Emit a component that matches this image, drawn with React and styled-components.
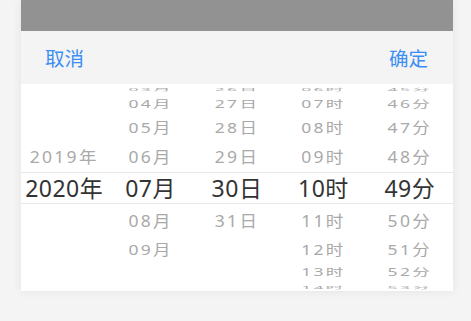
import React from 'react'
import styled, { createGlobalStyle } from 'styled-components'

const Global = createGlobalStyle`
  * {
    margin: 0;
    padding: 0;
    box-sizing: border-box;
  }
  body {
    background: #f4f4f4;
    font-family: "Noto Sans", "Noto Sans CJK SC", sans-serif;
  }
`

const Page = styled.div`
  width: 471px;
  height: 321px;
  padding: 0 18px 0 21px;
`

const Card = styled.div`
  display: flex;
  flex-direction: column;
  background: #fff;
  box-shadow: 0 0 10px rgba(0, 0, 0, 0.07);
`

const Mask = styled.div`
  height: 31px;
  background: #929292;
`

const Header = styled.div`
  height: 53px;
  display: flex;
  align-items: center;
  justify-content: space-between;
  padding: 0 25px 0 24px;
  background: #f4f4f4;
`

const Action = styled.span`
  font-family: "Noto Sans CJK SC", sans-serif;
  font-size: 19.5px;
  color: #3b8ef5;
`

const Body = styled.div`
  position: relative;
  height: 207px;
  display: flex;
  overflow: hidden;
  background: #fff;
`

const Band = styled.div`
  position: absolute;
  left: 0;
  right: 0;
  top: 88px;
  height: 32px;
  border-top: 1px solid #e8e8e8;
  border-bottom: 1px solid #e8e8e8;
  pointer-events: none;
`

const Wheel = styled.div`
  position: relative;
  flex: 1;
`

const Item = styled.div`
  position: absolute;
  left: 0;
  right: 0;
  top: 50%;
  height: 32px;
  margin-top: -16px;
  line-height: 32px;
  text-align: center;
  white-space: nowrap;
  font-family: "Noto Sans", "Noto Sans CJK SC", sans-serif;
  font-size: ${p => (p.$active ? '23px' : '17.5px')};
  letter-spacing: ${p => (p.$active ? '0.5px' : '2.3px')};
  color: ${p => (p.$active ? '#333' : '#a9a9a9')};
`

const OFFSETS = [0, 32, 61, 84, 99]
const SCALES = [1, 0.94, 0.84, 0.6, 0.22]

const pad = n => String(n).padStart(2, '0')

const range = (from, to, fmt) => {
  const out = []
  for (let i = from; i <= to; i++) out.push(fmt(i))
  return out
}

const columns = [
  { items: ['2019年', '2020年'], active: 1 },
  { items: range(3, 9, i => pad(i) + '月'), active: 4 },
  { items: range(26, 31, i => i + '日'), active: 4 },
  { items: range(6, 14, i => pad(i) + '时'), active: 4 },
  { items: range(45, 53, i => i + '分'), active: 4 },
]

const Column = ({ items, active }) => (
  <Wheel>
    {items.map((label, i) => {
      const k = i - active
      const d = Math.min(Math.abs(k), 4)
      const y = Math.sign(k) * OFFSETS[d]
      return (
        <Item
          key={label}
          $active={k === 0}
          style={{ transform: `translateY(${y}px) scaleY(${SCALES[d]})` }}
        >
          {label}
        </Item>
      )
    })}
  </Wheel>
)

export default function App() {
  return (
    <>
      <Global />
      <Page>
        <Card>
          <Mask />
          <Header>
            <Action>取消</Action>
            <Action>确定</Action>
          </Header>
          <Body>
            <Band />
            {columns.map((c, i) => (
              <Column key={i} items={c.items} active={c.active} />
            ))}
          </Body>
        </Card>
      </Page>
    </>
  )
}
